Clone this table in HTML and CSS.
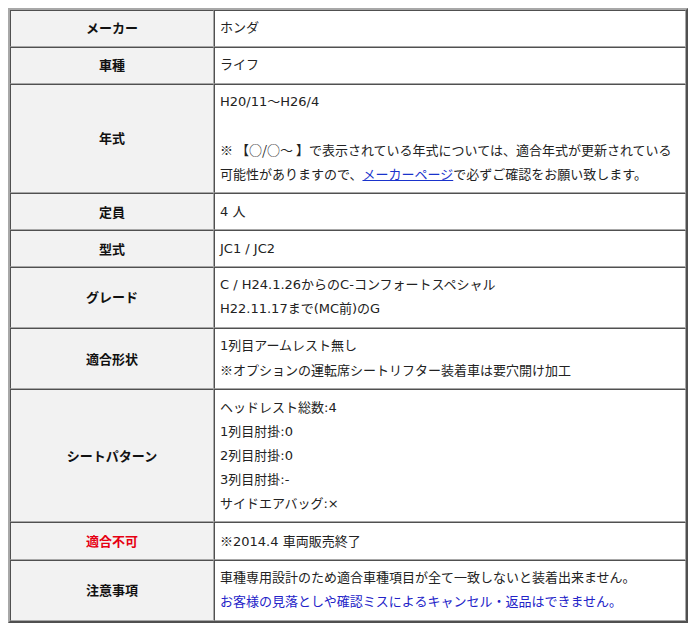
FILE: index.html
```html
<!DOCTYPE html>
<html lang="ja">
<head>
<meta charset="utf-8">
<title>適合表</title>
<link rel="stylesheet" href="styles.css">
</head>
<body>
<table class="spec">
  <colgroup>
    <col class="col-head">
    <col class="col-body">
  </colgroup>
  <tbody>
    <tr><th>メーカー</th><td>ホンダ</td></tr>
    <tr><th>車種</th><td>ライフ</td></tr>
    <tr>
      <th>年式</th>
      <td>H20/11～H26/4<br><br><span class="cjk">※ 【○/○～ 】</span>で表示されている年式については、適合年式が更新されている<br>可能性がありますので、<a class="link" href="#">メーカーページ</a>で必ずご確認をお願い致します。</td>
    </tr>
    <tr><th>定員</th><td>4 人</td></tr>
    <tr><th>型式</th><td>JC1 / JC2</td></tr>
    <tr><th>グレード</th><td>C / H24.1.26からのC-コンフォートスペシャル<br>H22.11.17まで(MC前)のG</td></tr>
    <tr><th>適合形状</th><td>1列目アームレスト無し<br><span class="cjk">※</span>オプションの運転席シートリフター装着車は要穴開け加工</td></tr>
    <tr><th>シートパターン</th><td>ヘッドレスト総数:4<br>1列目肘掛:0<br>2列目肘掛:0<br>3列目肘掛:-<br>サイドエアバッグ:×</td></tr>
    <tr><th class="alert">適合不可</th><td><span class="cjk">※</span>2014.4 車両販売終了</td></tr>
    <tr><th>注意事項</th><td>車種専用設計のため適合車種項目が全て一致しないと装着出来ません。<br><span class="note">お客様の見落としや確認ミスによるキャンセル・返品はできません。</span></td></tr>
  </tbody>
</table>
</body>
</html>
```
FILE: styles.css
```css
html, body {
  background: #ffffff;
}
body {
  margin: 8px;
  font-family: "DejaVu Sans", "Noto Sans CJK JP", sans-serif;
  font-size: 13px;
  color: #222222;
}
.spec {
  width: 680px;
  table-layout: fixed;
  border-collapse: separate;
  border-spacing: 0;
  border-style: solid;
  border-width: 2px;
  border-color: #a8a8a8 #505050 #505050 #a8a8a8;
}
.col-head {
  width: 204px;
}
.spec th,
.spec td {
  border-style: solid;
  border-width: 1px;
  border-color: #505050 #a8a8a8 #a8a8a8 #505050;
  padding: 5.4px 5px;
  line-height: 24px;
  vertical-align: middle;
}
.spec th {
  background: #f2f2f2;
  font-family: "Noto Sans CJK JP", sans-serif;
  font-weight: bold;
  color: #111111;
  text-align: center;
}
.spec td {
  background: #ffffff;
  text-align: left;
}
.spec th.alert {
  color: #e60012;
}
.cjk {
  font-family: "Noto Sans CJK JP", sans-serif;
}
.link {
  color: #1a33cc;
  text-decoration: underline;
}
.note {
  color: #2323c8;
}
```
